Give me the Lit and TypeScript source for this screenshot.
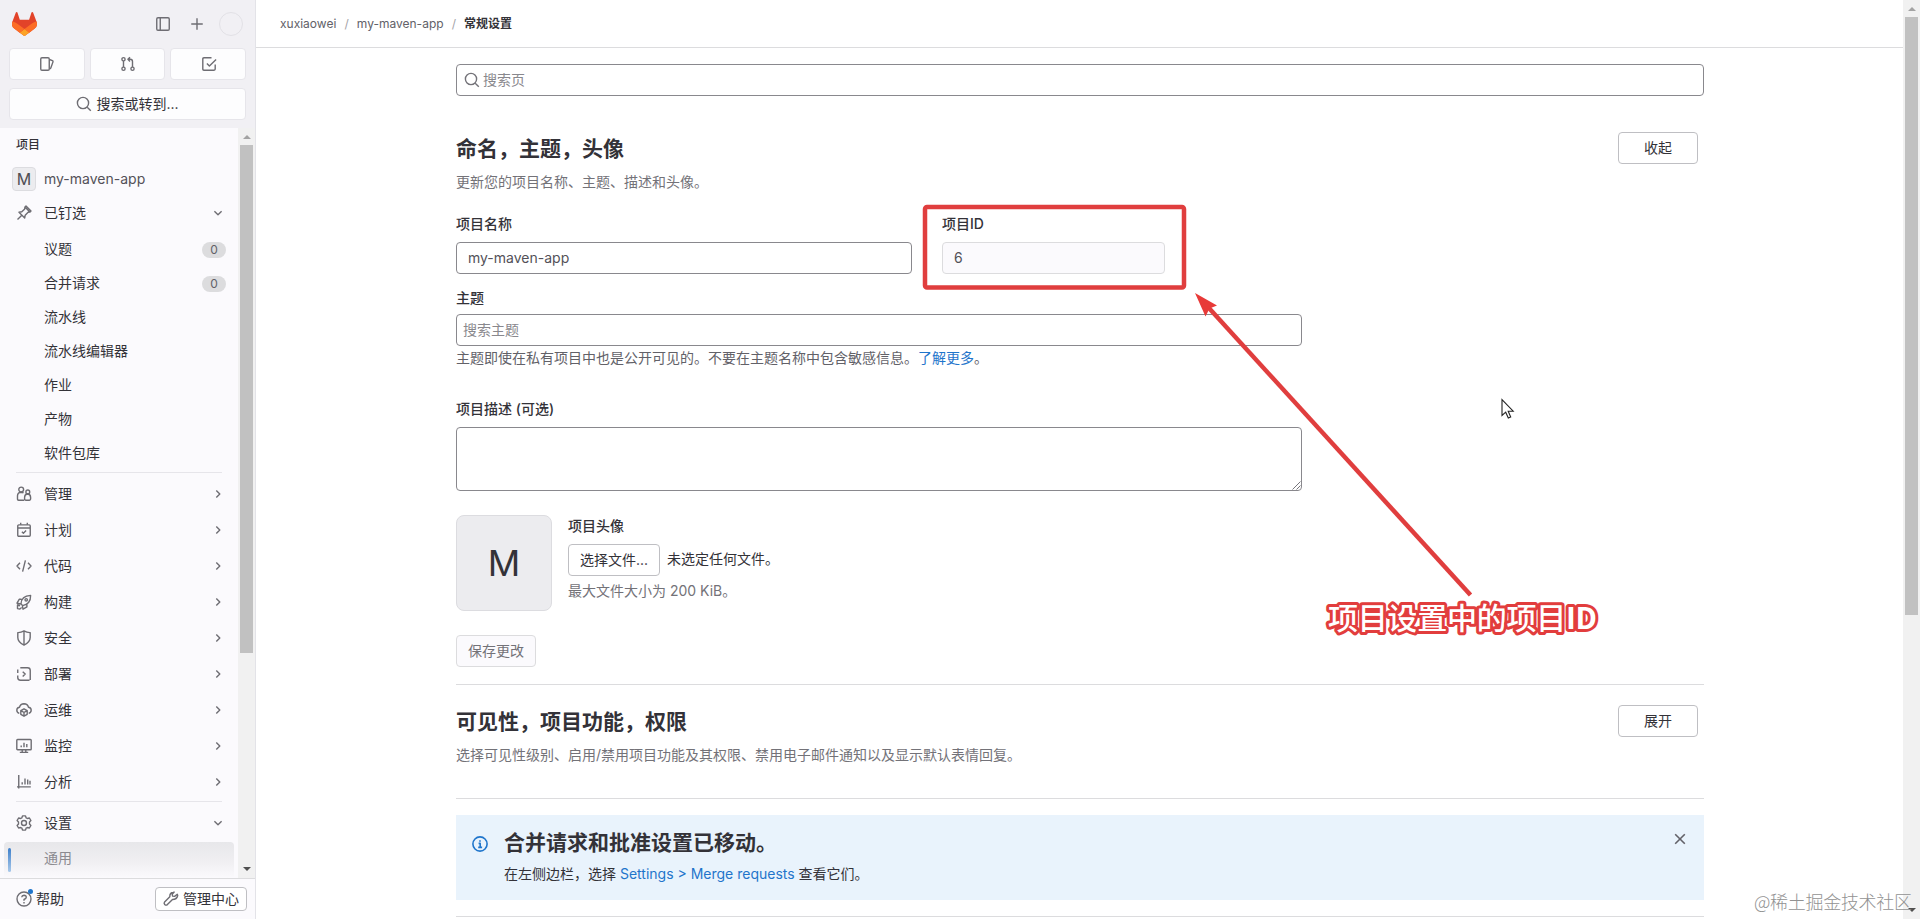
import { LitElement, html, css, svg, TemplateResult, SVGTemplateResult } from "lit";
import { customElement } from "lit/decorators.js";

const glyphs: Record<string, SVGTemplateResult> = {
  sidebar: svg`<rect x="1.75" y="1.75" width="12.5" height="12.5" rx="1.25"/><path d="M5.25 2v12"/>`,
  plus: svg`<path d="M8 2.25v11.5M2.25 8h11.5"/>`,
  issues: svg`<rect x="1.75" y="1.75" width="8.5" height="12.5" rx="1.25"/><path d="M10.5 3.5l2.9 1.1q.9.4.6 1.3l-2.2 6.2q-.3.8-1.2.6"/>`,
  merge: svg`<circle cx="3.5" cy="3.25" r="1.6"/><circle cx="3.5" cy="12.75" r="1.6"/><circle cx="12.5" cy="12.75" r="1.6"/><path d="M3.5 5v6M12.5 11V5.5q0-2.2-2.2-2.2H8.2M10 1.2L7.9 3.3L10 5.4"/>`,
  todo: svg`<path d="M15.2 8.5v4.600q0 1.100-1.100 1.100H3.900q-1.100 0-1.100-1.100V2.900q0-1.100 1.100-1.100h7.600"/><path d="M6.900 7.400l2.500 2.500 6.700-6.400"/>`,
  search: svg`<circle cx="7" cy="7" r="5.600"/><path d="M11.200 11.200l3.600 3.600"/>`,
  pin: svg`<path d="M1.500 14.500L5.600 10.400M3 7.300l5.700 5.700.5-2.800 2.900-2.900 1.800-.2-5-5-.2 1.800-2.900 2.900zM8.700 2.200L10 1l5 5-1.200 1.200"/>`,
  down: svg`<path d="M4.400 6.300L8 9.800l3.600-3.500"/>`,
  right: svg`<path d="M6.300 4.400L9.800 8l-3.500 3.600"/>`,
  users: svg`<circle cx="5.200" cy="3.500" r="2.400"/><circle cx="11.800" cy="5.900" r="1.900"/><path d="M8.200 14.200H2.600q-1.100 0-1.100-1.100V9.700Q1.600 6.400 5 6.200q1.600 0 2.500.8M8.600 11.200q.1-3 3-3.200 2.900.1 3 3.200v1.900q0 1.100-1.100 1.100H9.700q-1.100 0-1.100-1.100z"/>`,
  calendar: svg`<rect x="1.750" y="2.900" width="12.500" height="11.300" rx="1"/><path d="M2 6h12M4.700.8v2M11.300.8v2M5.900 9.800l1.500 1.400 2.700-2.600"/>`,
  code: svg`<path d="M4 4.800L1 8l3 3.200M12 4.800L15 8l-3 3.200M9.400 2.400L6.600 13.600"/>`,
  rocket: svg`<path d="M5 9.800Q5.400 2 14.600 1.400 14.800 9.800 6.600 11.600zM5.600 5.300H3.200L1 9.200l3.800.8M10.900 10.200v2.700L7 15.200l-.6-3.500M4.100 11.700L1.500 11v3.600l2.300.4q1.400-.4 1.500-1.800"/><circle cx="10.200" cy="5.800" r="1.200"/>`,
  shield: svg`<path d="M8 .9q3 1.800 6.200 1.700v5q0 4.600-6.200 7.500-6.200-2.900-6.200-7.500v-5Q5 2.700 8 .9zM8 1.500v13"/>`,
  deploy: svg`<path d="M4.300 1.750h7.200q2.750 0 2.750 2.750V14M13.500 14.250H4.500q-2.750 0-2.750-2.750V9.500M1.750 7V3.500M14.250 11v3M6.700 5.700L9.200 8l-2.500 2.400"/>`,
  cloud: svg`<path d="M3.300 11.400Q.8 10.600.8 8q.2-2.500 2.700-2.800Q4.400 1.800 8 1.700q3.600.1 4.500 3.500 2.500.3 2.700 2.800 0 2.600-2.500 3.400"/><path d="M8 6.800l3.200 1.800v3.700L8 14.200l-3.200-1.900V8.600zM5 8.700l3 1.800 3-1.800M8 10.500v3.500"/>`,
  monitor: svg`<rect x=".8" y="1.500" width="14.400" height="10.200" rx=".8"/><path d="M3.800 14.400h8.400M6.200 12v2.200M9.800 12v2.200M5.200 7.500v1.700M8 4.700v4.500M10.800 6v3.200"/>`,
  chart: svg`<path d="M2.750 1v13.500M1 12.900h13.800M6.200 8.200v2.300M9 4.400v6.100M11.700 5.400v5.100M14 6.800v3.700"/>`,
  gear: svg`<path d="M6.500.9h3l.6 1.900 1.300.7 2-.5 1.500 2.500L13.500 7v2l1.400 1.500-1.500 2.500-2-.5-1.300.7-.6 1.900h-3l-.6-1.900-1.300-.7-2 .5-1.500-2.500L2.500 9V7L1.100 5.500 2.600 3l2 .5 1.300-.7z"/><circle cx="8" cy="8" r="2.500"/>`,
  help: svg`<circle cx="8" cy="8" r="7"/><path d="M5.700 6.300Q5.900 4.400 8 4.300q2.200.1 2.300 2Q10.200 7.700 8 8.500v1.200M8 11.100v1.300"/>`,
  wrench: svg`<path d="M10.300 1.300q-3.600.5-3.500 4.400L1.600 10.900q-1 1.300.1 2.600 1.300 1.200 2.700.1l5.100-5.100q4.400 0 5.200-4l-.4-1.200-2.700 2.100-2-.3-.4-1.900 2-2.100z"/>`,
  info: svg`<circle cx="8" cy="8" r="7.100"/><path d="M6.600 7.400H8.200v3.900M6.200 11.400h3.900M8 4.200v1.500"/>`,
  close: svg`<path d="M3.200 3.200l9.600 9.600M12.800 3.200l-9.600 9.600"/>`,
};

const icon = (name: string): TemplateResult =>
  html`<svg class="icon" viewBox="0 0 16 16" width="16" height="16">${glyphs[name]}</svg>`;

const base = css`
  * { box-sizing: border-box; }
  .icon {
    display: block; flex: none; overflow: visible;
    fill: none; stroke: currentColor; stroke-width: 1.4; stroke-linejoin: round;
  }
`;

@customElement("side-nav")
class SideNav extends LitElement {
  static styles = [base, css`
    :host {
      display: flex; flex-direction: column; flex: none; box-sizing: border-box;
      width: 256px; height: 100%; border-right: 1px solid #e3e3e8;
      background: #fbfafd; color: #333238;
    }
    .top { background: #f1f0f4; height: 128px; padding: 0 9px; flex: none; }
    .brand { display: flex; align-items: center; height: 48px; padding: 0 3px; color: #6e6d73; }
    .logo { display: block; margin-right: auto; }
    .brand .icon { margin-right: 18px; }
    .face { width: 24px; height: 24px; border: 1px solid #e2e1e6; border-radius: 50%; margin-left: 14px; }
    .brand .plus .icon { margin-right: 0; }
    .trio { display: flex; gap: 5px; }
    .tile {
      display: flex; align-items: center; justify-content: center; gap: 4px;
      height: 32px; flex: 1; background: #fdfdfe; border: 1px solid #e6e5ea; border-radius: 4px; color: #6e6d73;
    }
    .find { margin-top: 8px; font-size: 14px; line-height: 20px; }
    .find span { color: #333238; padding-bottom: 1px; }
    .body { display: flex; flex: 1; min-height: 0; overflow: hidden; }
    .list { width: 238px; }
    .caption { font-size: 12px; font-weight: 500; line-height: 32px; padding: 1px 0 0 16px; height: 33px; }
    .row {
      display: grid; grid-template-columns: 32px 1fr 16px; align-items: center;
      height: 36px; padding: 0 12px 0 12px; font-size: 14px; line-height: 20px;
    }
    .row .icon { color: #6e6d73; margin-left: 4px; }
    .row .end .icon { margin-left: 0; }
    .project { height: 35px; }
    .avatar {
      width: 24px; height: 24px; border: 1px solid #dcdce0; border-radius: 4px; background: #ececef;
      font-size: 16px; line-height: 23px; text-align: center; color: #4f4e54;
    }
    .name { color: #535158; font-size: 14px; padding-top: 1px; }
    .pinned { height: 36px; padding-bottom: 2px; }
    .sub { display: flex; align-items: center; justify-content: space-between; height: 34px; padding: 0 12px 0 44px; font-size: 14px; line-height: 20px; }
    .count { width: 24px; height: 16px; border-radius: 8px; background: #dcdcde; color: #626168; font-size: 12px; line-height: 16px; text-align: center; margin-top: 2px; }
    .line { height: 1px; margin: 2px 16px 3px; background: #e6e5ea; }
    .line.two { margin-top: 1px; }
    .current {
      display: flex; align-items: center; height: 36px; margin: 1px 4px 0; padding: 0 4px; border-radius: 4px 4px 0 0;
      background: linear-gradient(#e7e7ea, #f0eff2 55%, #fbfafd); color: #8b8a90; font-size: 14px; line-height: 20px;
    }
    .current span:last-child { padding-bottom: 4px; }
    .mark { width: 3px; height: 24px; border-radius: 2px; background: linear-gradient(#3d7fcb, #a9c9ea); margin-right: 33px; }
    .bar { display: flex; flex-direction: column; align-items: center; width: 17px; background: #f1f1f1; }
    .up { width: 0; border: 4px solid transparent; border-top: 0; border-bottom: 4px solid #a3a3a3; margin: 7px 0 6px; }
    .thumb { width: 13px; height: 508px; background: #c1c1c1; margin-bottom: auto; }
    .dn { width: 0; border: 4px solid transparent; border-bottom: 0; border-top: 4px solid #505050; margin-bottom: 7px; }
    .foot {
      display: flex; align-items: center; justify-content: space-between; flex: none;
      height: 41px; border-top: 1px solid #dcdcde; padding: 0 8px 0 16px; font-size: 14px; line-height: 20px;
    }
    .foot .icon { color: #6e6d73; }
    .foot span { padding-bottom: 1px; }
    .help { display: flex; align-items: center; gap: 4px; position: relative; }
    .dot { position: absolute; left: 12px; top: 0; width: 5px; height: 5px; border-radius: 50%; background: #1f75cb; }
    .admin {
      display: flex; align-items: center; justify-content: center; gap: 4px; width: 92px; height: 24px;
      background: #fff; border: 1px solid #bfbfc3; border-radius: 4px;
    }
  `];

  pinned: [string, string?][] = [["议题", "0"], ["合并请求", "0"], ["流水线"], ["流水线编辑器"], ["作业"], ["产物"], ["软件包库"]];
  groups: [string, string][] = [
    ["users", "管理"], ["calendar", "计划"], ["code", "代码"], ["rocket", "构建"], ["shield", "安全"],
    ["deploy", "部署"], ["cloud", "运维"], ["monitor", "监控"], ["chart", "分析"],
  ];

  render() {
    return html`
      <div class="top">
        <div class="brand">
          <svg class="logo" width="25" height="24" viewBox="0 0 25 24">
            <path fill="#E24329" d="m24.507 9.5-.034-.09L21.082.562a.896.896 0 0 0-1.694.091l-2.29 7.01H7.825L5.535.653a.898.898 0 0 0-1.694-.09L.451 9.411.416 9.5a6.297 6.297 0 0 0 2.09 7.278l.012.01.03.022 5.16 3.867 2.56 1.935 1.554 1.176a1.051 1.051 0 0 0 1.268 0l1.555-1.176 2.56-1.935 5.197-3.89.014-.01A6.297 6.297 0 0 0 24.507 9.5Z"/>
            <path fill="#FC6D26" d="m24.507 9.5-.034-.09a11.44 11.44 0 0 0-4.56 2.051l-7.447 5.632 4.742 3.584 5.197-3.89.014-.01A6.297 6.297 0 0 0 24.507 9.5Z"/>
            <path fill="#FCA326" d="m7.707 20.677 2.56 1.935 1.555 1.176a1.051 1.051 0 0 0 1.268 0l1.555-1.176 2.56-1.935-4.743-3.584-4.755 3.584Z"/>
            <path fill="#FC6D26" d="M5.01 11.461a11.43 11.43 0 0 0-4.56-2.05L.416 9.5a6.297 6.297 0 0 0 2.09 7.278l.012.01.03.022 5.16 3.867 4.745-3.584-7.444-5.632Z"/>
          </svg>
          ${icon("sidebar")}<span class="plus">${icon("plus")}</span>
          <div class="face"></div>
        </div>
        <div class="trio">
          <div class="tile">${icon("issues")}</div>
          <div class="tile">${icon("merge")}</div>
          <div class="tile">${icon("todo")}</div>
        </div>
        <div class="tile find">${icon("search")}<span>搜索或转到...</span></div>
      </div>
      <div class="body">
        <div class="list">
          <div class="caption">项目</div>
          <div class="row project"><span class="avatar">M</span><span class="name">my-maven-app</span></div>
          <div class="row pinned">${icon("pin")}<span>已钉选</span><span class="end">${icon("down")}</span></div>
          ${this.pinned.map(([t, n]) => html`<div class="sub"><span>${t}</span>${n ? html`<span class="count">${n}</span>` : ""}</div>`)}
          <div class="line"></div>
          ${this.groups.map(([g, t]) => html`<div class="row">${icon(g)}<span>${t}</span><span class="end">${icon("right")}</span></div>`)}
          <div class="line two"></div>
          <div class="row">${icon("gear")}<span>设置</span><span class="end">${icon("down")}</span></div>
          <div class="current"><span class="mark"></span><span>通用</span></div>
        </div>
        <div class="bar"><span class="up"></span><span class="thumb"></span><span class="dn"></span></div>
      </div>
      <div class="foot">
        <div class="help">${icon("help")}<span>帮助</span><i class="dot"></i></div>
        <div class="admin">${icon("wrench")}<span>管理中心</span></div>
      </div>`;
  }
}

@customElement("settings-page")
class SettingsPage extends LitElement {
  static styles = [base, css`
    :host { display: block; flex: 1; height: 100%; overflow: hidden; color: #333238; font-size: 14px; line-height: 20px; }
    .crumbs {
      display: flex; align-items: center; height: 48px; padding-left: 24px;
      border-bottom: 1px solid #dcdcde; font-size: 12px; color: #626168;
    }
    .crumbs i { font-style: normal; color: #a4a3a8; width: 20.5px; text-align: center; }
    .crumbs b { font-weight: 600; color: #333238; }
    .content { width: 1248px; margin: 16px 0 0 200px; }
    .field { display: flex; align-items: center; height: 32px; border: 1px solid #89888d; border-radius: 4px; background: #fff; }
    .search { padding-left: 7px; gap: 3px; color: #89888d; }
    .search .icon { color: #737278; }
    .head { display: flex; justify-content: space-between; }
    .first { margin-top: 36px; }
    h2 { font-size: 21px; line-height: 28px; font-weight: 700; margin: 3px 0 9px; color: #333238; }
    p { margin: 0; }
    .muted { color: #737278; }
    .btn {
      display: flex; align-items: center; justify-content: center; height: 32px; width: 80px;
      border: 1px solid #bfbfc3; border-radius: 4px; background: #fff;
    }
    .head .btn { margin-right: 6px; }
    .label { display: block; font-weight: 500; }
    .pair { display: flex; gap: 30px; margin-top: 22px; }
    .pair .label { margin-bottom: 8px; }
    .pair .field { padding-left: 11px; color: #535158; }
    .wide { width: 456px; }
    .slim { width: 223px; }
    .pair .slim .field { background: #fbfafd; border-color: #dcdcde; }
    .col { width: 846px; }
    .topics { margin: 14px 0 6px; }
    .ph { padding-left: 6px; color: #89888d; }
    .hint { margin-top: 2px; color: #626168; }
    a { color: #1f75cb; text-decoration: none; }
    .desc { margin: 31px 0 8px; }
    .area { display: flex; align-items: flex-end; justify-content: flex-end; height: 64px; border: 1px solid #89888d; border-radius: 4px; }
    .grip { display: block; stroke: #77767c; }
    .media { display: flex; gap: 16px; margin-top: 24px; }
    .big {
      width: 96px; height: 96px; border: 1px solid #dcdce0; border-radius: 8px; background: #ececef;
      font-size: 36px; line-height: 94px; text-align: center;
    }
    .media .label { margin: 1px 0 8px; }
    .pick { display: flex; align-items: center; gap: 7px; margin-bottom: 5px; }
    .pick .btn { width: 92px; }
    .pick > span { padding-bottom: 2px; }
    .save { margin-top: 24px; color: #737278; background: #fbfafd; border-color: #dcdcde; }
    .rule { height: 1px; background: #dcdcde; }
    .r1 { margin: 17px 0 20px; }
    .r2 { margin: 33px 0 16px; }
    .alert { display: flex; height: 85px; background: #e9f3fc; padding: 14px 16px 0; }
    .alert > .icon { color: #1f75cb; margin-top: 7px; stroke-width: 1.6; }
    .alert > .icon:last-child { color: #626168; margin: 2px 0 0 auto; }
    .msg { margin-left: 16px; }
    .msg h2 { margin: 0 0 7px; }
    .r3 { margin-top: 16px; }
  `];

  render() {
    return html`
      <nav class="crumbs"><span>xuxiaowei</span><i>/</i><span>my-maven-app</span><i>/</i><b>常规设置</b></nav>
      <div class="content">
        <div class="field search">${icon("search")}<span>搜索页</span></div>
        <div class="head first">
          <div><h2>命名，主题，头像</h2><p class="muted">更新您的项目名称、主题、描述和头像。</p></div>
          <div class="btn">收起</div>
        </div>
        <div class="pair">
          <div class="wide"><span class="label">项目名称</span><div class="field">my-maven-app</div></div>
          <div class="slim"><span class="label">项目ID</span><div class="field">6</div></div>
        </div>
        <div class="col">
          <span class="label topics">主题</span>
          <div class="field ph">搜索主题</div>
          <p class="hint">主题即使在私有项目中也是公开可见的。不要在主题名称中包含敏感信息。<a>了解更多</a>。</p>
          <span class="label desc">项目描述 (可选)</span>
          <div class="area"><svg class="grip" width="10" height="10" viewBox="0 0 10 10"><path d="M1.500 9.500L9.500 1.500M5.500 9.500L9.500 5.500"/></svg></div>
        </div>
        <div class="media">
          <div class="big">M</div>
          <div>
            <span class="label">项目头像</span>
            <div class="pick"><div class="btn">选择文件...</div><span>未选定任何文件。</span></div>
            <p class="muted">最大文件大小为 200 KiB。</p>
          </div>
        </div>
        <div class="btn save">保存更改</div>
        <div class="rule r1"></div>
        <div class="head">
          <div><h2>可见性，项目功能，权限</h2><p class="muted">选择可见性级别、启用/禁用项目功能及其权限、禁用电子邮件通知以及显示默认表情回复。</p></div>
          <div class="btn">展开</div>
        </div>
        <div class="rule r2"></div>
        <div class="alert">
          ${icon("info")}
          <div class="msg"><h2>合并请求和批准设置已移动。</h2><p>在左侧边栏，选择 <a>Settings &gt; Merge requests</a> 查看它们。</p></div>
          ${icon("close")}
        </div>
        <div class="rule r3"></div>
      </div>`;
  }
}

@customElement("app-root")
class AppRoot extends LitElement {
  static styles = [base, css`
    :host {
      display: flex; position: relative; width: 1920px; height: 919px; overflow: hidden; background: #fff;
      font-family: Inter, "Noto Sans CJK SC", sans-serif;
    }
    .bar { display: flex; flex-direction: column; align-items: center; flex: none; width: 17px; background: #f1f1f1; }
    .up { width: 0; border: 4px solid transparent; border-top: 0; border-bottom: 4px solid #a3a3a3; margin: 7px 0 6px; }
    .thumb { width: 13px; height: 598px; background: #c1c1c1; margin-bottom: auto; }
    .dn { width: 0; border: 4px solid transparent; border-bottom: 0; border-top: 4px solid #505050; margin-bottom: 7px; }
    .marks { position: absolute; left: 0; top: 0; pointer-events: none; }
    .note { font: 500 30px "Noto Sans CJK SC", sans-serif; fill: #fff; stroke: #e23d3d; stroke-width: 6px; stroke-linejoin: round; paint-order: stroke; }
    .bold { font-weight: 700; }
    .water { font: 300 18px "Noto Sans CJK SC", sans-serif; fill: #929292; }
  `];

  render() {
    return html`
      <side-nav></side-nav>
      <settings-page></settings-page>
      <div class="bar"><span class="up"></span><span class="thumb"></span><span class="dn"></span></div>
      <svg class="marks" width="1920" height="919" viewBox="0 0 1920 919">
        <rect x="925" y="207" width="259" height="80.500" rx="2" fill="none" stroke="#e03e3e" stroke-width="4.500"/>
        <path d="M1208 307L1470.500 595" stroke="#e03e3e" stroke-width="4.500" fill="none"/>
        <path d="M1195 293L1217 305.500L1209.500 308.500L1205.500 316.500Z" fill="#e83a38"/>
        <text class="note" x="1328" y="629" textLength="269">项目设置中的项目<tspan class="bold">ID</tspan></text>
        <path d="M1502 399.500V415.500L1505.700 412.200L1508.300 418L1510.700 417L1508.200 411.200H1513.200Z" fill="#fff" stroke="#222" stroke-width="1.100"/>
        <text class="water" x="1754" y="909" textLength="158">@稀土掘金技术社区</text>
      </svg>`;
  }
}
